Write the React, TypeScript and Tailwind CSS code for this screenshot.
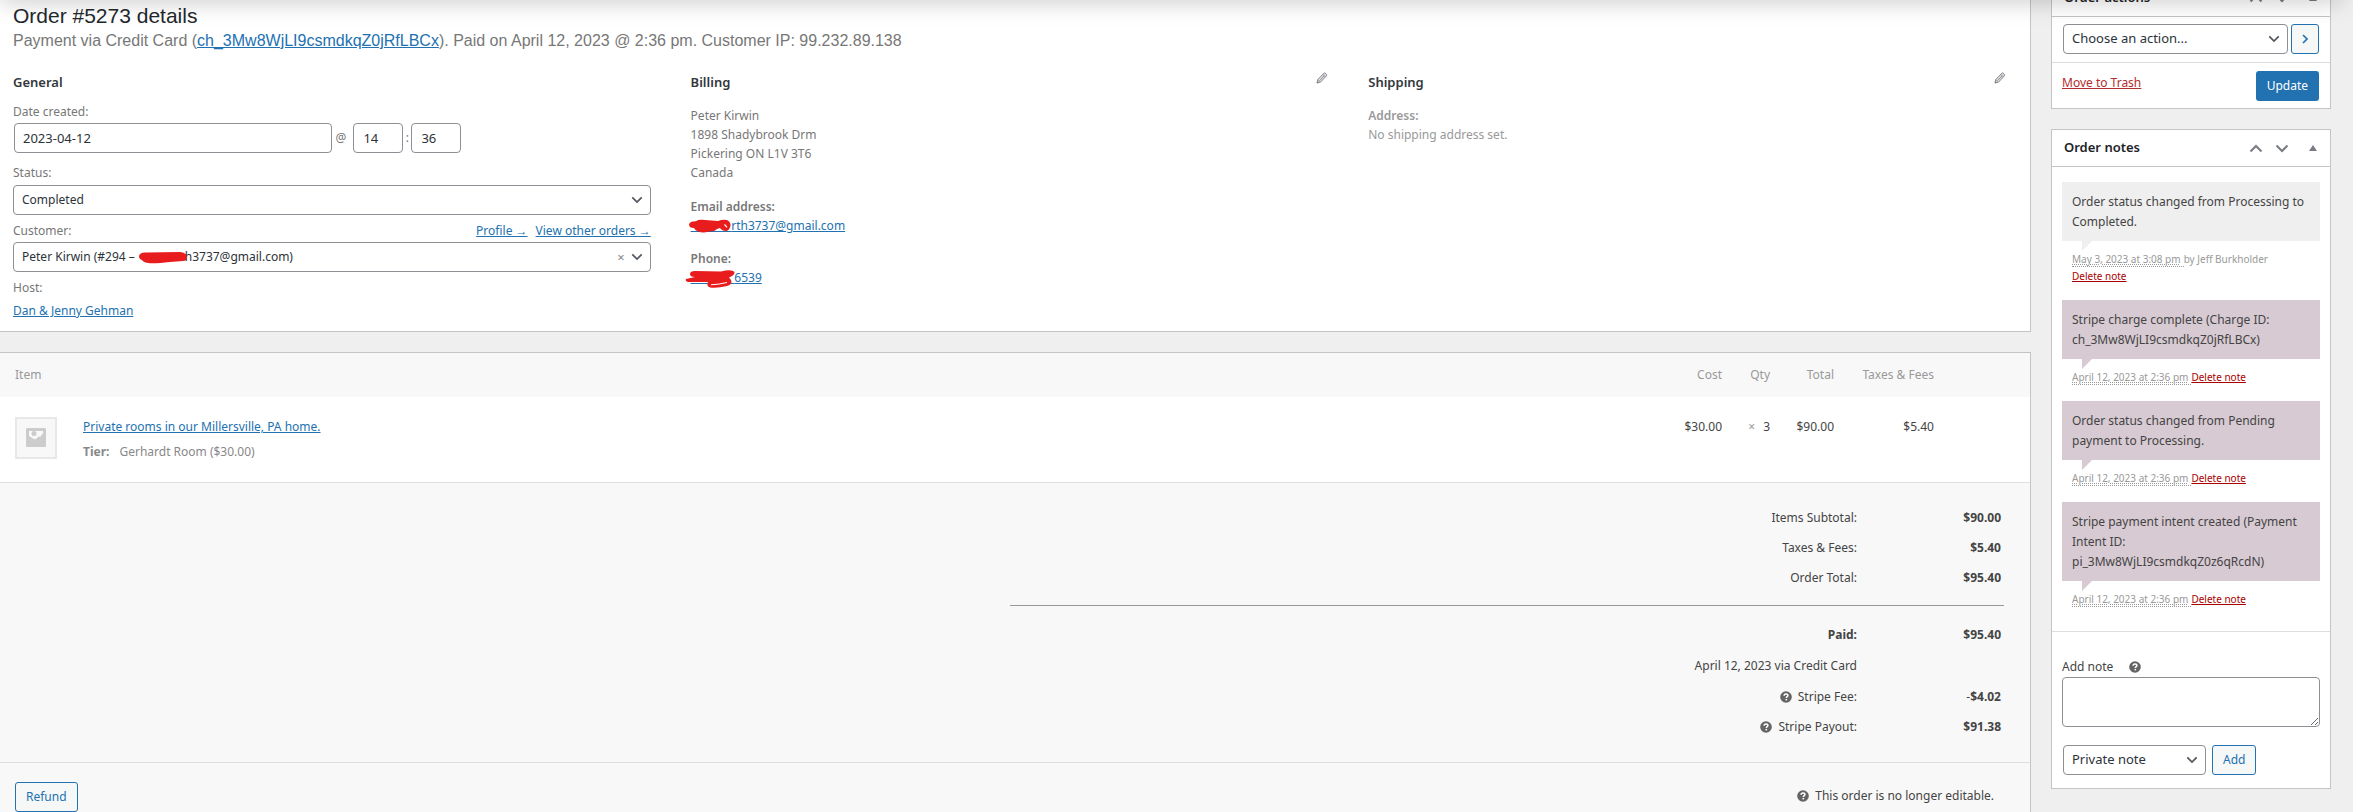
import type { ReactNode } from "react";

const LINK = "text-[#2271b1] underline";
const CONTROL = "h-[30px] rounded border border-[#8c8f94] bg-white text-[#2c3338]";

const ADDRESS = ["Peter Kirwin", "1898 Shadybrook Drm", "Pickering ON L1V 3T6", "Canada"];

const NOTES = [
  {
    text: "Order status changed from Processing to Completed.",
    date: "May 3, 2023 at 3:08 pm",
    author: "by Jeff Burkholder",
    system: false,
  },
  {
    text: "Stripe charge complete (Charge ID: ch_3Mw8WjLI9csmdkqZ0jRfLBCx)",
    date: "April 12, 2023 at 2:36 pm",
    author: "",
    system: true,
  },
  {
    text: "Order status changed from Pending payment to Processing.",
    date: "April 12, 2023 at 2:36 pm",
    author: "",
    system: true,
  },
  {
    text: "Stripe payment intent created (Payment Intent ID: pi_3Mw8WjLI9csmdkqZ0z6qRcdN)",
    date: "April 12, 2023 at 2:36 pm",
    author: "",
    system: true,
  },
];

function Chevron({ className, d = "M1.5 1.5 7 7l5.5-5.5" }: { className: string; d?: string }) {
  return (
    <svg viewBox="0 0 14 9" className={className} fill="none" stroke="currentColor" strokeWidth="2" aria-hidden>
      <path d={d} />
    </svg>
  );
}

function Help() {
  return (
    <svg viewBox="0 0 12 12" className="size-3 shrink-0" aria-hidden>
      <circle cx="6" cy="6" r="5.8" fill="#646464" />
      <path
        d="M4.1 4.7C4.1 3.5 4.9 2.9 6 2.9s1.9.6 1.9 1.6c0 1.2-1.6 1.2-1.6 2.5"
        fill="none"
        stroke="#fff"
        strokeWidth="1.5"
      />
      <rect x="5.5" y="7.9" width="1.6" height="1.5" fill="#fff" />
    </svg>
  );
}

function Pencil() {
  return (
    <svg viewBox="0 0 12 12" className="size-3" aria-hidden>
      <path
        d="M1 11l.7-3.4L7.4 1.6 8.8.8l1.9 1.7-.5 1.6-5.6 6z"
        fill="#dcdcde"
        stroke="#8c8f94"
        strokeWidth="1"
        strokeLinejoin="round"
      />
      <path d="M6.8 2.4l2.6 2.4M2 7.8l2.2 2M4 8.3l4-4.4" stroke="#8c8f94" strokeWidth=".9" />
      <path d="M.8 11.3l.5-2 1.5 1.4z" fill="#777" />
    </svg>
  );
}

function Select({ id, label, value, className }: { id: string; label: string; value: string; className: string }) {
  return (
    <div className={`relative ${className}`}>
      <select
        id={id}
        aria-label={label}
        defaultValue={value}
        className={`w-full appearance-none px-2 ${CONTROL}`}
      >
        <option>{value}</option>
      </select>
      <Chevron className="pointer-events-none absolute top-[11px] right-2 h-[8px] w-3 text-[#50575e]" />
    </div>
  );
}

function BoxHeader({ title }: { title: string }) {
  return (
    <div className="flex h-[37px] items-center border-b border-[#c3c4c7] pr-[13px] pl-3">
      <h2 className="flex-1 text-[13px] font-semibold text-[#1d2327]">{title}</h2>
      <div className="flex items-center text-[#787c82]">
        <button type="button" aria-label={`Move ${title} up`}>
          <Chevron className="h-[9px] w-[14px]" d="M1.5 7.5 7 2l5.5 5.5" />
        </button>
        <button type="button" aria-label={`Move ${title} down`} className="ml-3">
          <Chevron className="h-[9px] w-[14px]" />
        </button>
        <button type="button" aria-label={`Toggle ${title}`} className="ml-5">
          <svg viewBox="0 0 8 6" className="h-[6px] w-2" fill="currentColor" aria-hidden>
            <path d="M0 6l4-6 4 6z" />
          </svg>
        </button>
      </div>
    </div>
  );
}

function TotalRow({ label, children, className = "h-[30px]" }: { label: ReactNode; children?: ReactNode; className?: string }) {
  return (
    <tr className={className}>
      <td>
        <span className="flex items-center justify-end gap-[6px]">{label}</span>
      </td>
      <td className="w-[147px] pr-[3px] font-bold">{children}</td>
    </tr>
  );
}

function GeneralColumn() {
  return (
    <div>
      <h3 className="text-[13px] leading-5 font-semibold text-[#32373c]">General</h3>
      <label htmlFor="date" className="mt-[10px] block leading-5">
        Date created:
      </label>
      <div className="mt-px ml-px flex items-center">
        <input id="date" defaultValue="2023-04-12" className={`w-1/2 px-2 text-[13px] ${CONTROL}`} />
        <span className="w-[21px] pl-[3px]">@</span>
        <input aria-label="Hour" defaultValue="14" className={`w-[50px] px-[9px] text-[13px] ${CONTROL}`} />
        <span className="w-2 text-center">:</span>
        <input aria-label="Minute" defaultValue="36" className={`w-[50px] px-[9px] text-[13px] ${CONTROL}`} />
      </div>
      <label htmlFor="status" className="mt-[10px] mb-[2px] block leading-5">
        Status:
      </label>
      <Select id="status" label="Status" value="Completed" className="w-full" />
      <div className="mt-[6px] mb-px flex leading-5">
        <label htmlFor="customer" className="flex-1">
          Customer:
        </label>
        <a href="#profile" className={`mr-2 ${LINK}`}>
          Profile →
        </a>
        <a href="#orders" className={LINK}>
          View other orders →
        </a>
      </div>
      <div className="relative">
        <Select
          id="customer"
          label="Customer"
          value={`Peter Kirwin (#294 – ${"\u00a0".repeat(15)}h3737@gmail.com)`}
          className="w-full"
        />
        <svg viewBox="0 0 50 14" className="pointer-events-none absolute top-[9px] left-[125px] h-[14px] w-[50px]" aria-hidden>
          <path
            d="M1 5Q2 1 8 1.500L42 1Q49 2 49 6 49 10 45 10L32 11Q16 13 10 12 5 11 4 9 1 8 1 5z"
            fill="#e81c1c"
          />
        </svg>
        <button type="button" aria-label="Clear customer" className="absolute top-[5px] right-[26px] text-[13px] leading-5 text-[#888]">
          ×
        </button>
      </div>
      <p className="mt-[6px] leading-5">Host:</p>
      <a href="#host" className={`mt-[3px] block w-fit leading-5 ${LINK}`}>
        Dan &amp; Jenny Gehman
      </a>
    </div>
  );
}

function BillingColumn() {
  return (
    <div>
      <div className="flex h-5 justify-between">
        <h3 className="text-[13px] leading-5 font-semibold text-[#32373c]">Billing</h3>
        <button type="button" aria-label="Edit billing" className="h-3">
          <Pencil />
        </button>
      </div>
      <address className="mt-[14px] leading-[19px] not-italic">
        {ADDRESS.map((line) => (
          <span key={line} className="block">
            {line}
          </span>
        ))}
      </address>
      <p className="mt-[15px] leading-[19px]">
        <strong className="block font-semibold">Email address:</strong>
        <a href="#email" className={`relative ${LINK}`}>
          {"\u00a0".repeat(13)}rth3737@gmail.com
          <svg viewBox="0 0 42 15" className="absolute top-[2px] -left-[2px] h-[15px] w-[42px]" aria-hidden>
            <path
              d="M0 5.500Q1 2 7 2.200Q9 .5 13 .8L29 2Q34 0 38 1Q42 3 41.500 7Q40 12 37 12Q33 12 31 9L28 10Q26 12.500 20 12.500Q14 14.500 9 12.500Q6 11 5 9Q0 9 0 5.500z"
              fill="#e81c1c"
            />
            <path d="M35.500 5.500l2.500 2.800" stroke="#fff" strokeWidth="1.200" />
          </svg>
        </a>
      </p>
      <p className="mt-[14px] leading-[19px]">
        <strong className="block font-semibold">Phone:</strong>
        <a href="#phone" className={`relative ${LINK}`}>
          {"\u00a0".repeat(14)}6539
          <svg viewBox="0 0 50 20" className="absolute top-0 -left-[6px] h-5 w-[50px]" aria-hidden>
            <path
              d="M5 5Q5 2 10 2L36 2.500Q47 0 49.500 3Q50 6 44 8.500L46 11Q48 15 42 17Q32 19.500 25 18.500Q21 17 23 13L3 13Q0 12 1 10L10 8Q5 8 5 5z"
              fill="#e81c1c"
            />
            <path d="M26 15.800Q34 15.500 42 13.500" fill="none" stroke="#fff" strokeWidth="1" />
          </svg>
        </a>
      </p>
    </div>
  );
}

function OrderData() {
  return (
    <section className="border-r border-b border-[#c3c4c7] bg-white pr-6 pb-[10px] pl-[13px] text-[#777]">
      <h1 className="pt-px font-[Liberation_Sans,sans-serif] text-[21px] leading-[30px] text-[#23282d]">
        Order #5273 details
      </h1>
      <p className="font-[Liberation_Sans,sans-serif] text-[16px] leading-5">
        Payment via Credit Card (
        <a href="#charge" className={LINK}>
          ch_3Mw8WjLI9csmdkqZ0jRfLBCx
        </a>
        ). Paid on April 12, 2023 @ 2:36 pm. Customer IP: 99.232.89.138
      </p>
      <div className="mt-[21px] grid grid-cols-3 gap-[2%]">
        <GeneralColumn />
        <BillingColumn />
        <div className="text-[#999]">
          <div className="flex h-5 justify-between">
            <h3 className="text-[13px] leading-5 font-semibold text-[#32373c]">Shipping</h3>
            <button type="button" aria-label="Edit shipping" className="h-3">
              <Pencil />
            </button>
          </div>
          <p className="mt-[14px] leading-[19px]">
            <strong className="block font-semibold">Address:</strong>
            No shipping address set.
          </p>
        </div>
      </div>
    </section>
  );
}

function OrderItems() {
  return (
    <section className="mt-5 flex-1 border-t border-r border-[#c3c4c7] bg-[#f8f8f8]">
      <table className="w-full text-right">
        <thead className="h-11 text-[#999]">
          <tr>
            <th colSpan={2} className="pl-[15px] text-left font-normal">
              Item
            </th>
            <th className="w-20 font-normal">Cost</th>
            <th className="w-12 font-normal">Qty</th>
            <th className="w-16 font-normal">Total</th>
            <th className="w-[100px] font-normal">Taxes &amp; Fees</th>
            <th className="w-24" aria-label="Actions" />
          </tr>
        </thead>
        <tbody>
          <tr className="h-[85px] border-b border-[#dfdfdf] bg-white align-top leading-5 text-[#444]">
            <td className="w-[83px] pt-5 pl-[15px]">
              <span className="flex size-[42px] items-center justify-center border-2 border-[#e8e8e8] bg-[#f8f8f8]">
                <svg viewBox="0 0 20 20" className="size-5" aria-hidden>
                  <rect x="0" y="0" width="20" height="19" rx="1" fill="#ccc" />
                  <rect x="3" y="3" width="14" height="13" fill="#f8f8f8" />
                  <circle cx="8" cy="5.500" r="2.500" fill="#ccc" />
                  <path d="M3 16V8l4 2.500 2 1L13 8.500l1.500.5L16 6l1 .5V16z" fill="#ccc" />
                </svg>
              </span>
            </td>
            <td className="pt-5 text-left">
              <a href="#product" className={LINK}>
                Private rooms in our Millersville, PA home.
              </a>
              <p className="mt-[5px] flex gap-[10px] text-[#888]">
                <strong className="text-[12px] font-bold">Tier:</strong>
                Gerhardt Room ($30.00)
              </p>
            </td>
            <td className="pt-5">$30.00</td>
            <td className="pt-5">
              <span className="mr-2 text-[#999]">×</span>3
            </td>
            <td className="pt-5">$90.00</td>
            <td className="pt-5">$5.40</td>
            <td />
          </tr>
        </tbody>
      </table>

      <div className="border-b border-[#dfdfdf] pt-5 pr-[26px] pb-5 pl-4 text-[#444]">
        <div className="ml-auto w-1/2">
          <table className="w-full text-right">
            <tbody>
              <TotalRow label="Items Subtotal:">$90.00</TotalRow>
              <TotalRow label="Taxes &amp; Fees:">$5.40</TotalRow>
              <TotalRow label="Order Total:">$95.40</TotalRow>
            </tbody>
          </table>
          <table className="mt-3 w-full border-t border-[#999] text-right">
            <tbody>
              <TotalRow className="h-[45px] align-bottom leading-[30px]" label={<strong>Paid:</strong>}>
                $95.40
              </TotalRow>
              <TotalRow className="h-8" label="April 12, 2023 via Credit Card" />
              <TotalRow
                label={
                  <>
                    <Help />
                    Stripe Fee:
                  </>
                }
              >
                <span className="font-normal">-</span>$4.02
              </TotalRow>
              <TotalRow
                label={
                  <>
                    <Help />
                    Stripe Payout:
                  </>
                }
              >
                $91.38
              </TotalRow>
            </tbody>
          </table>
        </div>
      </div>

      <div className="flex items-start justify-between pt-[19px] pr-9 pl-[15px]">
        <button type="button" className="h-[30px] rounded-[3px] border border-[#2271b1] bg-[#f6f7f7] px-[10px] text-[#2271b1]">
          Refund
        </button>
        <span className="flex items-center gap-[6px] pt-1 leading-5 text-[#444]">
          <Help />
          This order is no longer editable.
        </span>
      </div>
    </section>
  );
}

function OrderActions() {
  return (
    <section className="border border-[#c3c4c7] bg-white">
      <BoxHeader title="Order actions" />
      <div className="flex gap-[3px] border-b border-[#ddd] pt-[7px] pr-[11px] pb-2 pl-[11px]">
        <Select id="action" label="Order action" value="Choose an action..." className="flex-1 text-[13px]" />
        <button
          type="button"
          aria-label="Apply"
          className="flex h-[30px] w-7 items-center justify-center rounded-[3px] border border-[#2271b1] bg-[#f6f7f7] text-[#2271b1]"
        >
          <svg viewBox="0 0 6 10" className="h-[10px] w-[6px]" fill="none" stroke="currentColor" strokeWidth="1.6" aria-hidden>
            <path d="M1 1l4 4-4 4" />
          </svg>
        </button>
      </div>
      <div className="flex items-start justify-between pt-2 pr-[11px] pb-[7px] pl-[10px]">
        <a href="#trash" className="pt-[2px] leading-5 text-[#b32d2e] underline">
          Move to Trash
        </a>
        <button type="submit" className="h-[30px] rounded-[3px] bg-[#2271b1] px-[11px] text-white">
          Update
        </button>
      </div>
    </section>
  );
}

function OrderNotes() {
  return (
    <section className="mt-5 border border-[#c3c4c7] bg-white">
      <BoxHeader title="Order notes" />
      <ul className="px-[10px] pt-[15px] pb-2">
        {NOTES.map((note) => (
          <li key={note.text} className="pb-[15px]">
            <div
              className={`relative px-[10px] pt-[10px] pb-[9px] leading-5 text-[#444] ${note.system ? "bg-[#d7cad2]" : "bg-[#efefef]"}`}
            >
              {note.text}
              <svg
                viewBox="0 0 10 10"
                className={`absolute top-full left-5 size-[10px] ${note.system ? "text-[#d7cad2]" : "text-[#efefef]"}`}
                fill="currentColor"
                aria-hidden
              >
                <path d="M0 0h10L0 10z" />
              </svg>
            </div>
            <p className="px-[10px] pt-[10px] text-[10px] leading-[17px] text-[#999]">
              <abbr className="border-b border-dotted border-[#999] pr-[3px] underline decoration-dotted">{note.date}</abbr>
              {note.author && (
                <>
                  {note.author}
                  <br />
                </>
              )}
              <a href="#delete" className="text-[#a00] underline">
                Delete note
              </a>
            </p>
          </li>
        ))}
      </ul>
      <div className="border-t border-[#ddd] px-[10px] pt-[25px] pb-[13px] text-[#444]">
        <label htmlFor="note" className="flex items-center gap-4 leading-5">
          Add note
          <Help />
        </label>
        <textarea id="note" className="block h-[50px] w-full rounded border border-[#8c8f94] bg-white" />
        <div className="mt-[18px] flex gap-[6px] pl-px">
          <Select id="note-type" label="Note type" value="Private note" className="w-[143px] text-[13px]" />
          <button type="button" className="h-[30px] rounded-[3px] border border-[#2271b1] bg-[#f6f7f7] px-[10px] text-[#2271b1]">
            Add
          </button>
        </div>
      </div>
    </section>
  );
}

export default function App() {
  return (
    <div className="relative flex min-h-screen gap-5 overflow-hidden bg-[#efefef] pr-[22px] font-[Noto_Sans,sans-serif] text-[12px]">
      <main className="flex min-w-0 flex-1 flex-col">
        <OrderData />
        <OrderItems />
      </main>
      {/* the sidebar is scrolled a little under the sticky bar */}
      <aside className="-mt-[21px] w-[280px] shrink-0">
        <OrderActions />
        <OrderNotes />
      </aside>
      <div className="pointer-events-none absolute -top-5 right-3 left-0 h-5 shadow-[0_0_24px_rgba(0,0,0,0.25)]" />
    </div>
  );
}
